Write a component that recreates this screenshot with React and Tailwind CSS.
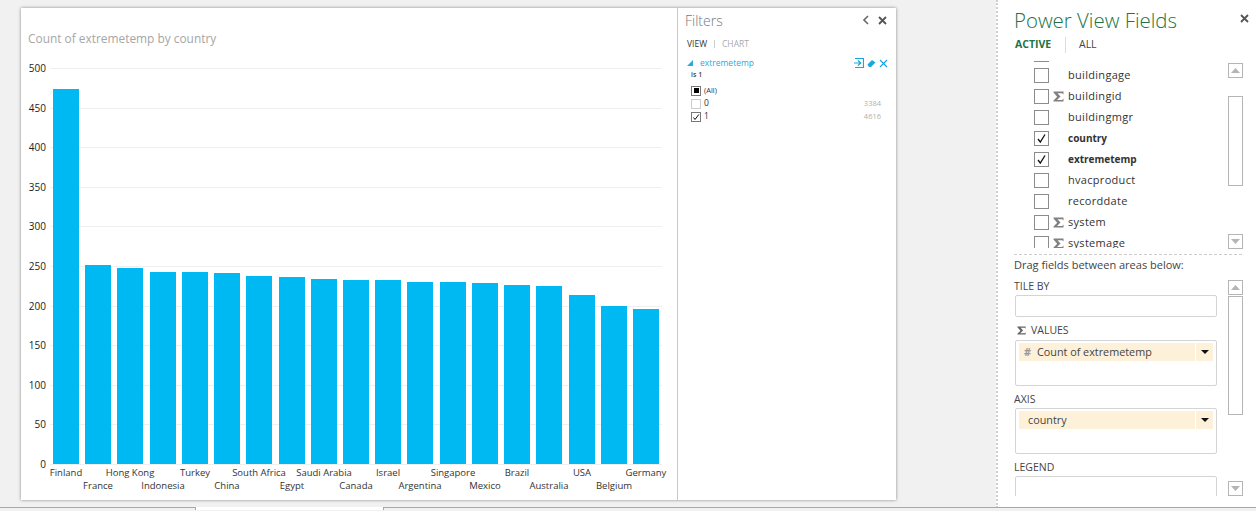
const FONT = "font-['Open_Sans','Noto_Sans',sans-serif]";

const bars = [
  ["Finland", 89], ["France", 265], ["Hong Kong", 268], ["Indonesia", 272], ["Turkey", 272],
  ["China", 273], ["South Africa", 276], ["Egypt", 277], ["Saudi Arabia", 279], ["Canada", 280],
  ["Israel", 280], ["Argentina", 282], ["Singapore", 282], ["Mexico", 283], ["Brazil", 285],
  ["Australia", 286], ["USA", 295], ["Belgium", 306], ["Germany", 309],
];
const ticks = [500, 450, 400, 350, 300, 250, 200, 150, 100, 50, 0];

function Chart() {
  const oy = 60;
  const ox = 21;
  return (
    <svg width="656" height="440" className="block" style={{ fontFamily: "'Open Sans', sans-serif" }}>
      {ticks.map((t, i) => {
        const y = Math.round(68 + i * 39.6) - oy + 0.5;
        return (
          <g key={t}>
            <line x1={50 - ox} x2={662 - ox} y1={y} y2={y} stroke="#efefef" strokeWidth="1" />
            <text x={46 - ox} y={y + 3} textAnchor="end" fontSize="10" fill="#222">{t}</text>
          </g>
        );
      })}
      {bars.map(([name, top], i) => {
        const x = Math.round(53 + i * 32.22) - ox;
        return (
          <g key={name}>
            <rect x={x} y={top - oy} width="26" height={464 - top} fill="#00b9f2" />
            <text x={x + 13} y={(i % 2 === 0 ? 476 : 489) - oy} textAnchor="middle" fontSize="9.5" fill="#333">{name}</text>
          </g>
        );
      })}
    </svg>
  );
}

function SmallBox({ checked, mark }) {
  return (
    <span className={`flex h-[10px] w-[10px] items-center justify-center border ${checked || mark ? "border-[#777]" : "border-[#ccc]"} bg-white`}>
      {mark && <span className="h-[5px] w-[5px] bg-black" />}
      {checked && (
        <svg width="8" height="8" viewBox="0 0 8 8"><path d="M1.5 4.5 L3 6.5 L6.8 1.5" fill="none" stroke="#111" strokeWidth="1" /></svg>
      )}
    </span>
  );
}

function FilterRow({ label, count, checked, mark }) {
  return (
    <div className="flex h-[13px] items-center pl-[13px] pr-[14px] text-[7.5px] text-[#333]">
      <SmallBox checked={checked} mark={mark} />
      <span className={`ml-[3px] flex-1 ${mark ? "text-[7.5px]" : "text-[8.5px]"}`}>{label}</span>
      <span className="text-[7.5px] text-[#b0b0b0]">{count}</span>
    </div>
  );
}

function Filters() {
  return (
    <div className="w-[218px] shrink-0 border-l border-[#c8c8c8] bg-white">
      <div className="flex h-[23px] items-end justify-between pl-[7px] pr-[8px]">
        <span className="text-[14px] font-light leading-[20px] text-[#777]">Filters</span>
        <div className="mb-[6px] flex items-center gap-[8px]">
          <svg width="8" height="10" viewBox="0 0 8 10"><path d="M6 1 L2 5 L6 9" fill="none" stroke="#666" strokeWidth="1.6" /></svg>
          <svg width="9" height="9" viewBox="0 0 9 9"><path d="M1 1 L8 8 M8 1 L1 8" fill="none" stroke="#555" strokeWidth="1.8" /></svg>
        </div>
      </div>
      <div className="mt-[7px] flex h-[12px] items-center pl-[9px] text-[8.5px] leading-none">
        <span className="text-[#333]">VIEW</span>
        <span className="mx-[7px] h-[8px] w-px bg-[#ccc]" />
        <span className="text-[#aaa]">CHART</span>
      </div>
      <div className="mt-[7px] flex h-[12px] items-center pl-[9px] pr-[7px]">
        <svg width="6" height="6" viewBox="0 0 6 6"><path d="M0 6 L6 6 L6 0 Z" fill="#2aa9e0" /></svg>
        <span className="ml-[7px] flex-1 text-[8.5px] text-[#2aa9e0]">extremetemp</span>
        <div className="flex items-center gap-[3px]">
          <svg width="10" height="10" viewBox="0 0 10 10"><path d="M1 0.5 H9.5 V9.5 H1 M0 5 H6.5 M4 2.5 L6.8 5 L4 7.5" fill="none" stroke="#18a7e0" strokeWidth="1.2" /></svg>
          <svg width="9" height="9" viewBox="0 0 9 9"><path d="M0.5 5.5 L5 1 L8.5 3.5 L4 8 L2 8 Z" fill="#18a7e0" /></svg>
          <svg width="9" height="9" viewBox="0 0 9 9"><path d="M1 1 L8 8 M8 1 L1 8" fill="none" stroke="#18a7e0" strokeWidth="1.2" /></svg>
        </div>
      </div>
      <div className="h-[10px] pl-[13px] text-[7px] font-semibold leading-[12px] text-[#444]">is 1</div>
      <div className="mt-[5px]">
        <FilterRow label="(All)" mark />
        <FilterRow label="0" count="3384" />
        <FilterRow label="1" count="4616" checked />
      </div>
    </div>
  );
}

function Sigma({ size = 11, color = "#808080" }) {
  return (
    <svg width={size} height={size} viewBox="0 0 11 11">
      <path d="M0.5 0.5 H10.5 V3.5 L9.2 2.2 H4.5 L7.5 5.5 L4 9 H9.2 L10.5 7.5 V10.5 H0.5 V9.6 L4.2 5.8 L0.5 1.4 Z" fill={color} />
    </svg>
  );
}

function Field({ name, sigma, checked }) {
  return (
    <div className="flex h-[21px] shrink-0 items-center pl-[34px]">
      <span className="flex h-[15px] w-[15px] shrink-0 items-center justify-center border border-[#8c8c8c] bg-white">
        {checked && (
          <svg width="11" height="11" viewBox="0 0 11 11"><path d="M2 6 L4.3 9 L9 1.5" fill="none" stroke="#111" strokeWidth="1.3" /></svg>
        )}
      </span>
      <span className="flex w-[19px] shrink-0 justify-center pr-[1px]">{sigma && <Sigma />}</span>
      <span className={checked ? "text-[10px] font-bold text-[#333]" : "text-[11px] tracking-[0.3px] text-[#333]"}>{name}</span>
    </div>
  );
}

function ScrollBtn({ up }) {
  return (
    <div className="flex h-[15px] w-[15px] shrink-0 items-center justify-center border border-[#b5b5b5] bg-white">
      <svg width="9" height="5" viewBox="0 0 9 5">
        <path d={up ? "M0 5 L4.5 0 L9 5 Z" : "M0 0 L9 0 L4.5 5 Z"} fill="#b5b5b5" />
      </svg>
    </div>
  );
}

function Caret() {
  return <svg width="8" height="4" viewBox="0 0 8 4"><path d="M0 0 H8 L4 4 Z" fill="#111" /></svg>;
}

function Chip({ hash, label }) {
  return (
    <div className="flex h-[18px] gap-px text-[10.8px] text-[#444]">
      <div className="flex w-[176px] items-center bg-[#fdf1d9] pl-[5px]">
        {hash ? <span className="w-[13px] font-bold text-[#999]">#</span> : <span className="w-[4px]" />}
        <span>{label}</span>
      </div>
      <div className="flex flex-1 items-center justify-center bg-[#fdf1d9]"><Caret /></div>
    </div>
  );
}

function DropBox({ children, className = "" }) {
  return (
    <div className={`w-[202px] rounded-[2px] border border-[#d4d4d4] px-[3px] pt-[2px] ${className}`}>{children}</div>
  );
}

function AreaLabel({ children }) {
  return <div className="flex h-[13px] items-center text-[10.5px] text-[#444]">{children}</div>;
}

function FieldsPanel() {
  return (
    <div className="flex h-[508px] w-[260px] shrink-0 flex-col overflow-hidden border-b border-l-2 border-b-[#a8a8a8] border-l-[#d0d0d0] bg-white pl-[2px] [border-left-style:dotted]">
      <div className="flex h-[35px] items-end justify-between pl-[14px] pr-[7px]">
        <span className="whitespace-nowrap text-[20.4px] font-light leading-[30px] text-[#217346]">Power View Fields</span>
        <svg className="mb-[12px]" width="9" height="9" viewBox="0 0 9 9"><path d="M1 1 L8 8 M8 1 L1 8" fill="none" stroke="#555" strokeWidth="1.8" /></svg>
      </div>
      <div className="mt-[2px] flex h-[16px] items-center pl-[15px] text-[10.5px]">
        <span className="w-[50px] font-bold text-[#217346]">ACTIVE</span>
        <span className="h-[16px] w-px bg-[#ddd]" />
        <span className="ml-[13px] text-[#444]">ALL</span>
      </div>
      <div className="mt-[8px] flex h-[189px] pr-[13px]">
        <div className="h-[187px] flex-1 overflow-hidden">
          <div className="-mt-[17px]">
            <Field name="" />
            <Field name="buildingage" />
            <Field name="buildingid" sigma />
            <Field name="buildingmgr" />
            <Field name="country" checked />
            <Field name="extremetemp" checked />
            <Field name="hvacproduct" />
            <Field name="recorddate" />
            <Field name="system" sigma />
            <Field name="systemage" sigma />
          </div>
        </div>
        <div className="flex w-[15px] flex-col items-center pt-[2px]">
          <ScrollBtn up />
          <div className="mt-[18px] h-[90px] w-[15px] border border-[#b5b5b5] bg-white" />
          <div className="mt-[48px]"><ScrollBtn /></div>
        </div>
      </div>
      <div className="ml-[14px] mr-[14px] mt-[4px] border-t border-dashed border-[#ccc]" />
      <div className="mt-[3px] pl-[14px] text-[11px] leading-[14px] text-[#444]">Drag fields between areas below:</div>
      <div className="mt-[8px] flex h-[216px] overflow-hidden pl-[14px] pr-[13px]">
        <div className="flex-1 overflow-hidden">
          <AreaLabel>TILE BY</AreaLabel>
          <DropBox className="mt-[2px] ml-px h-[22px]" />
          <div className="mt-[7px]">
            <AreaLabel><span className="ml-[3px] mr-[5px]"><Sigma size={9} color="#666" /></span>VALUES</AreaLabel>
          </div>
          <DropBox className="mt-[3px] ml-px h-[46px]"><Chip hash label="Count of extremetemp" /></DropBox>
          <div className="mt-[7px]"><AreaLabel>AXIS</AreaLabel></div>
          <DropBox className="mt-[2px] ml-px h-[46px]"><Chip label="country" /></DropBox>
          <div className="mt-[7px]"><AreaLabel>LEGEND</AreaLabel></div>
          <DropBox className="mt-[2px] ml-px h-[30px]" />
        </div>
        <div className="flex w-[15px] shrink-0 flex-col">
          <div className="shrink-0"><ScrollBtn up /></div>
          <div className="mt-[1px] h-[119px] w-[15px] shrink-0 border border-[#b5b5b5] bg-white" />
          <div className="mt-[66px]"><ScrollBtn /></div>
        </div>
      </div>
    </div>
  );
}

export default function App() {
  return (
    <div className={`h-[511px] w-[1256px] overflow-hidden bg-[#f1f1f1] ${FONT}`}>
      <div className="flex h-[508px]">
        <div className="flex-1 pl-[21px] pt-[8px]">
          <div className="flex h-[492px] w-[875px] bg-white shadow-[0_0_3px_rgba(0,0,0,0.45)]">
            <div className="w-[656px] shrink-0">
              <div className="h-[52px] pl-[7px] pt-[21px] text-[11.9px] leading-[18px] text-[#a6a6a6]">Count of extremetemp by country</div>
              <Chart />
            </div>
            <Filters />
          </div>
        </div>
        <FieldsPanel />
      </div>
      <div className="flex h-[3px]">
        <div className="-mt-px h-[3px] w-[196px] border-t border-r border-[#a8a8a8]" />
        <div className="-mt-px h-[3px] w-[187px] bg-[#ffffff]" />
        <div className="-mt-px h-[3px] flex-1 border-t border-l border-[#a8a8a8]" />
      </div>
    </div>
  );
}
